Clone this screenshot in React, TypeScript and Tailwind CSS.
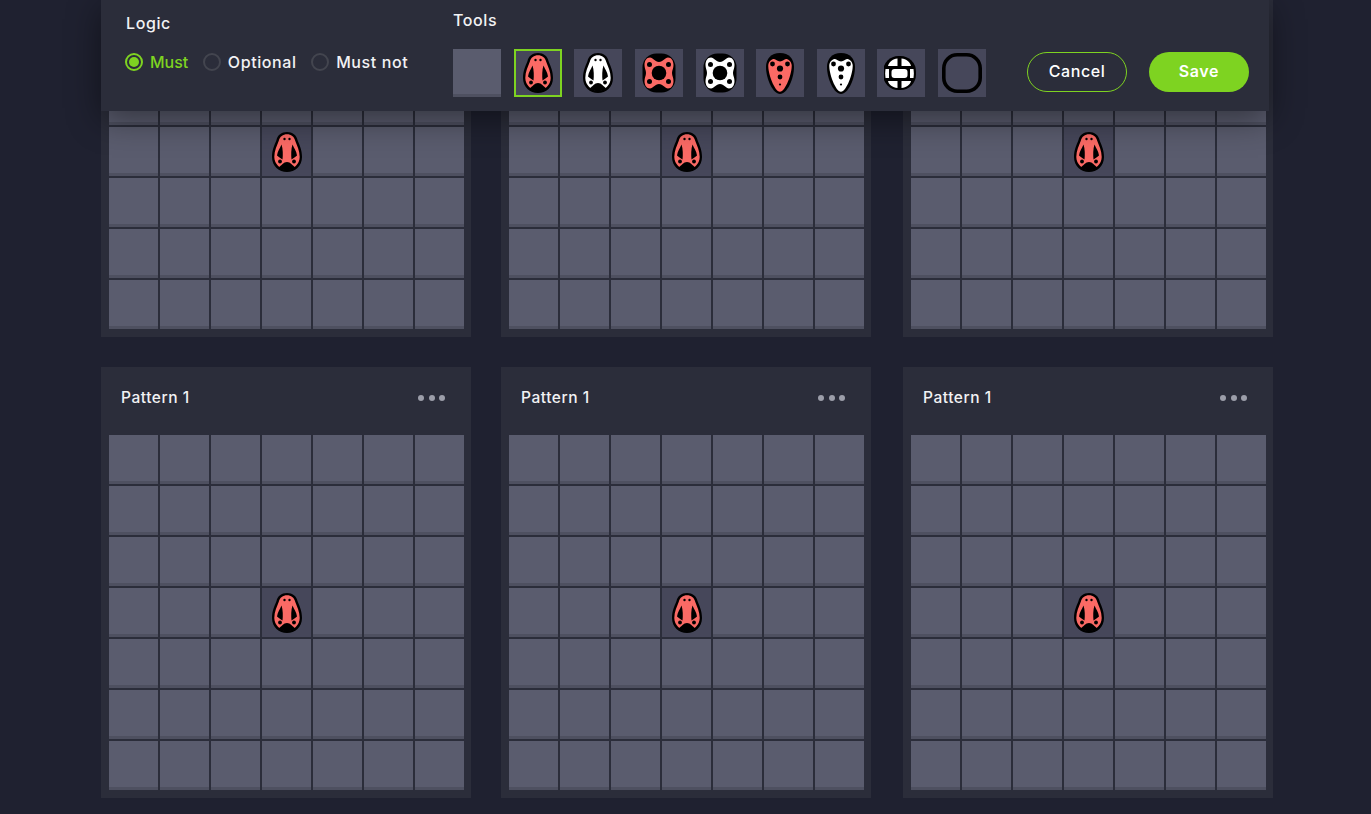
const OUTER = 'M16 1C10.5 1 6.5 4 5.5 9C3.5 14 1 19 1 26C1 35 8 41 16 41C24 41 31 35 31 26C31 19 28.5 14 26.5 9C25.5 4 21.5 1 16 1Z';
const INNER = 'M16 3.3C12 3.3 8.8 5.5 7.8 9.8C6 14.5 3.3 20 3.3 26C3.3 33 9.5 38.7 16 38.7C22.5 38.7 28.7 33 28.7 26C28.7 20 26 14.5 24.2 9.8C23.2 5.5 20 3.3 16 3.3Z';

const Beetle = ({ fill }: { fill: string }) => (
  <svg width="32" height="42" viewBox="0 0 32 42">
    <path d={OUTER} fill="#000" />
    <path d={INNER} fill={fill} />
    <circle cx="13.5" cy="8" r="1.2" fill="#000" />
    <circle cx="18.5" cy="8" r="1.2" fill="#000" />
    <path d="M10.5 13.5C9 17 6.5 20.5 6 24.5C7.5 26 9.5 27 11.5 28.5C12 24 12 18 10.5 13.5Z" fill="#000" />
    <path d="M21.5 13.5C23 17 25.5 20.5 26 24.5C24.5 26 22.5 27 20.5 28.5C20 24 20 18 21.5 13.5Z" fill="#000" />
    <path d="M7.5 36.5C10.5 34.5 12.5 31 16 31C19.5 31 21.5 34.5 24.5 36.5C21 40 11 40 7.5 36.5Z" fill="#000" />
    <circle cx="9" cy="30.5" r="1.9" fill="#000" />
    <circle cx="23" cy="30.5" r="1.9" fill="#000" />
  </svg>
);

const Cross = ({ fill }: { fill: string }) => (
  <svg width="34" height="40" viewBox="0 0 34 40">
    <rect x="0.5" y="0.5" width="33" height="39" rx="14" fill="#000" />
    <path
      d="M8 4.5C11 4.5 13 9 17 9C21 9 23 4.5 26 4.5C29.5 4.5 31.5 8 31.5 12C31.5 15.5 30 17 30 20C30 23 31.5 24.5 31.5 28C31.5 32 29.5 35.5 26 35.5C23 35.5 21 31 17 31C13 31 11 35.5 8 35.5C4.5 35.5 2.5 32 2.5 28C2.5 24.5 4 23 4 20C4 17 2.5 15.5 2.5 12C2.5 8 4.5 4.5 8 4.5Z"
      fill={fill}
    />
    <circle cx="17" cy="20" r="7.3" fill="#000" />
    <circle cx="7.5" cy="11.5" r="2.5" fill="#000" />
    <circle cx="26.5" cy="11.5" r="2.5" fill="#000" />
    <circle cx="7.5" cy="28.5" r="2.5" fill="#000" />
    <circle cx="26.5" cy="28.5" r="2.5" fill="#000" />
  </svg>
);

const Tux = ({ fill }: { fill: string }) => (
  <svg width="30" height="43" viewBox="0 0 30 43">
    <path d="M15 1C6 1 1 7 1 15C1 27 8 42 15 42C22 42 29 27 29 15C29 7 24 1 15 1Z" fill="#000" />
    <path d="M3.3 13C3.8 9.5 6.5 7 9 7C11 7 12 9.5 15 9.5C18 9.5 19 7 21 7C23.5 7 26.2 9.5 26.7 13C27.2 21 20.5 39.7 15 39.7C9.5 39.7 2.8 21 3.3 13Z" fill={fill} />
    <circle cx="7.5" cy="12" r="2.4" fill="#000" />
    <circle cx="22.5" cy="12" r="2.4" fill="#000" />
    <circle cx="15" cy="16.5" r="3.1" fill="#000" />
    <circle cx="15" cy="25" r="2.4" fill="#000" />
    <circle cx="15" cy="32.5" r="1.1" fill="#000" />
  </svg>
);

const Globe = () => (
  <svg width="34" height="36" viewBox="1.5 0 34 36">
    <rect x="0.5" y="1" width="33" height="34" rx="15.5" fill="#000" />
    <path d="M5.5 11C6.5 7 10 4 15 3.5V11Z" fill="#fff" />
    <path d="M28.5 11C27.5 7 24 4 19 3.5V11Z" fill="#fff" />
    <rect x="9" y="14" width="16" height="9" rx="3" fill="#fff" />
    <path d="M3 14H6.5V23H3C2.5 20 2.5 17 3 14Z" fill="#fff" />
    <path d="M31 14H27.5V23H31C31.5 20 31.5 17 31 14Z" fill="#fff" />
    <path d="M5.5 26C6.5 30 10 32.5 15 33V26Z" fill="#fff" />
    <path d="M28.5 26C27.5 30 24 32.5 19 33V26Z" fill="#fff" />
  </svg>
);

const Ring = () => (
  <svg width="42" height="42" viewBox="0 0 42 42">
    <rect x="2.8" y="2.8" width="36.4" height="36.4" rx="13.5" fill="none" stroke="#000" strokeWidth="3.6" />
  </svg>
);

const CORAL = '#fb6a65';

const tools = [
  <Beetle fill={CORAL} />,
  <Beetle fill="#fff" />,
  <Cross fill={CORAL} />,
  <Cross fill="#fff" />,
  <Tux fill={CORAL} />,
  <Tux fill="#fff" />,
  <Globe />,
  <Ring />,
];

const Radio = ({ label, active }: { label: string; active?: boolean }) => (
  <div className="flex items-center gap-[7px]">
    {active ? (
      <span className="w-[18px] h-[18px] rounded-full border-2 border-[#7ed321] flex items-center justify-center">
        <span className="w-[10px] h-[10px] rounded-full bg-[#7ed321]"></span>
      </span>
    ) : (
      <span className="w-[18px] h-[18px] rounded-full border-2 border-[#43454f]"></span>
    )}
    <span className={active ? 'text-[#7ed321] tracking-[0px]' : 'text-[#f2f2f4]'}>{label}</span>
  </div>
);

const Cell = ({ filled }: { filled: boolean }) =>
  filled ? (
    <div className="h-[49px] bg-[#46475a] flex items-center justify-center">
      <Beetle fill={CORAL} />
    </div>
  ) : (
    <div className="h-[49px] bg-[#5a5c6e] border-b-[3px] border-[#4e5060]"></div>
  );

const PatternCard = ({ showHeader }: { showHeader: boolean }) => (
  <div className="w-[370px] h-[431px] bg-[#2b2d3a]">
    <div className="h-[68px] pl-5 pr-[26px] pb-[6px] flex items-center justify-between">
      {showHeader && (
        <>
          <span className="text-[15.5px] tracking-[0.55px] font-medium text-[#f2f2f4]">Pattern 1</span>
          <div className="flex gap-[4.5px]">
            <span className="w-[6px] h-[6px] rounded-full bg-[#9c9ea9]"></span>
            <span className="w-[6px] h-[6px] rounded-full bg-[#9c9ea9]"></span>
            <span className="w-[6px] h-[6px] rounded-full bg-[#9c9ea9]"></span>
          </div>
        </>
      )}
    </div>
    <div className="ml-2 w-[355px] grid grid-cols-7 gap-[2px]">
      {Array.from({ length: 49 }).map((_, i) => (
        <Cell key={i} filled={i === 24} />
      ))}
    </div>
  </div>
);

export default function App() {
  return (
    <div className="relative h-screen overflow-hidden bg-[#1f2130] font-['Inter',sans-serif]">
      <div className="absolute top-0 left-[101px] w-[1168px] h-[111px] z-10 flex bg-[#2b2d3a] shadow-[0_8px_32px_rgba(0,0,0,0.45)] text-[16px] leading-6 tracking-[0.6px] font-medium text-[#f2f2f4]">
        <div className="w-[352px] pl-6 pt-[11px]">
          <div className="ml-px">Logic</div>
          <div className="mt-[15px] flex gap-[14.5px]">
            <Radio label="Must" active />
            <Radio label="Optional" />
            <Radio label="Must not" />
          </div>
        </div>
        <div className="pt-2">
          <div>Tools</div>
          <div className="mt-[17px] flex gap-[12.625px]">
            <div className="w-12 h-12 bg-[#5a5c6e] border-b-[3px] border-[#4e5060]"></div>
            {tools.map((icon, i) => (
              <div
                key={i}
                className={`w-12 h-12 bg-[#46475a] flex items-center justify-center ${i === 0 ? 'border-2 border-[#7ed321]' : ''}`}
              >
                {icon}
              </div>
            ))}
          </div>
        </div>
        <div className="ml-auto pr-5 pt-[52px] flex gap-[22px]">
          <button className="w-[100px] h-10 pb-[2px] rounded-full border border-[#7ed321] text-white">Cancel</button>
          <button className="w-[100px] h-10 pb-[2px] rounded-full bg-[#7ed321] text-white font-semibold">Save</button>
        </div>
      </div>
      <div className="-mt-[94px] ml-[101px] grid grid-cols-[400px_402px_370px] gap-y-[30px]">
        {Array.from({ length: 6 }).map((_, i) => (
          <PatternCard key={i} showHeader={i >= 3} />
        ))}
      </div>
    </div>
  );
}
